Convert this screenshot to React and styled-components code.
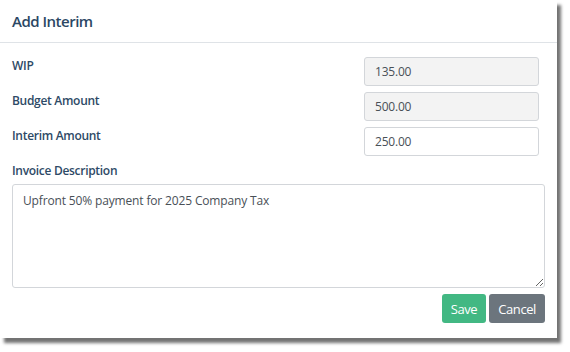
import React from "react";
import styled, { createGlobalStyle } from "styled-components";

const GlobalStyle = createGlobalStyle`
  html, body {
    margin: 0;
    padding: 0;
    background: #ffffff;
  }
  body {
    font-family: "Open Sans", "Noto Sans", "Liberation Sans", sans-serif;
  }
`;

const fields = [
  { label: "WIP", value: "135.00", readOnly: true },
  { label: "Budget Amount", value: "500.00", readOnly: true },
  { label: "Interim Amount", value: "250.00", readOnly: false },
];

export default function App() {
  return (
    <Page>
      <GlobalStyle />
      <Modal>
        <Header>
          <Title>Add Interim</Title>
        </Header>
        <Body>
          {fields.map((f) => (
            <Row key={f.label}>
              <Label>{f.label}</Label>
              <Input readOnly={f.readOnly} defaultValue={f.value} />
            </Row>
          ))}
          <Label>Invoice Description</Label>
          <TextArea defaultValue="Upfront 50% payment for 2025 Company Tax" />
          <Footer>
            <Button color="#42b883">Save</Button>
            <Button color="#6c757d">Cancel</Button>
          </Footer>
        </Body>
      </Modal>
    </Page>
  );
}

const Page = styled.div`
  min-height: 352px;
`;

const Modal = styled.div`
  width: 557px;
  height: 338px;
  background: #ffffff;
  box-shadow: 4px 5px 3px rgba(0, 0, 0, 0.55);
  display: flex;
  flex-direction: column;
`;

const Header = styled.div`
  height: 43px;
  box-sizing: border-box;
  border-bottom: 1px solid #dfe3e7;
  display: flex;
  align-items: center;
  padding: 0 12px;
`;

const Title = styled.div`
  font-size: 15px;
  font-weight: 600;
  letter-spacing: -0.5px;
  color: #2b4764;
  margin-top: -1px;
`;

const Body = styled.div`
  padding: 14px 12px 0 12px;
  display: flex;
  flex-direction: column;
`;

const Row = styled.div`
  display: flex;
  align-items: flex-start;
  justify-content: space-between;
  padding-right: 6px;
  margin-bottom: 6px;
`;

const Label = styled.div`
  font-size: 12px;
  font-weight: 600;
  letter-spacing: -0.3px;
  color: #2e4a66;
  line-height: 16px;
  padding-top: 1px;
`;

const Input = styled.input`
  width: 175px;
  height: 29px;
  box-sizing: border-box;
  border: 1px solid #d3d6da;
  border-radius: 3px;
  padding: 0 10px;
  font-family: inherit;
  font-size: 12px;
  letter-spacing: -0.2px;
  color: #495057;
  background: ${(props) => (props.readOnly ? "#f3f3f3" : "#ffffff")};
  outline: none;
`;

const TextArea = styled.textarea`
  margin-top: 5px;
  height: 104px;
  box-sizing: border-box;
  border: 1px solid #d3d6da;
  border-radius: 3px;
  padding: 7px 10px;
  font-family: inherit;
  font-size: 12px;
  letter-spacing: -0.15px;
  color: #495057;
  resize: vertical;
  outline: none;
`;

const Footer = styled.div`
  display: flex;
  justify-content: flex-end;
  gap: 3px;
  margin-top: 6px;
`;

const Button = styled.button`
  height: 29px;
  padding: 0 9px;
  border: none;
  border-radius: 3px;
  background: ${(props) => props.color};
  color: #ffffff;
  font-family: inherit;
  font-size: 13px;
  letter-spacing: -0.4px;
  cursor: pointer;
`;
